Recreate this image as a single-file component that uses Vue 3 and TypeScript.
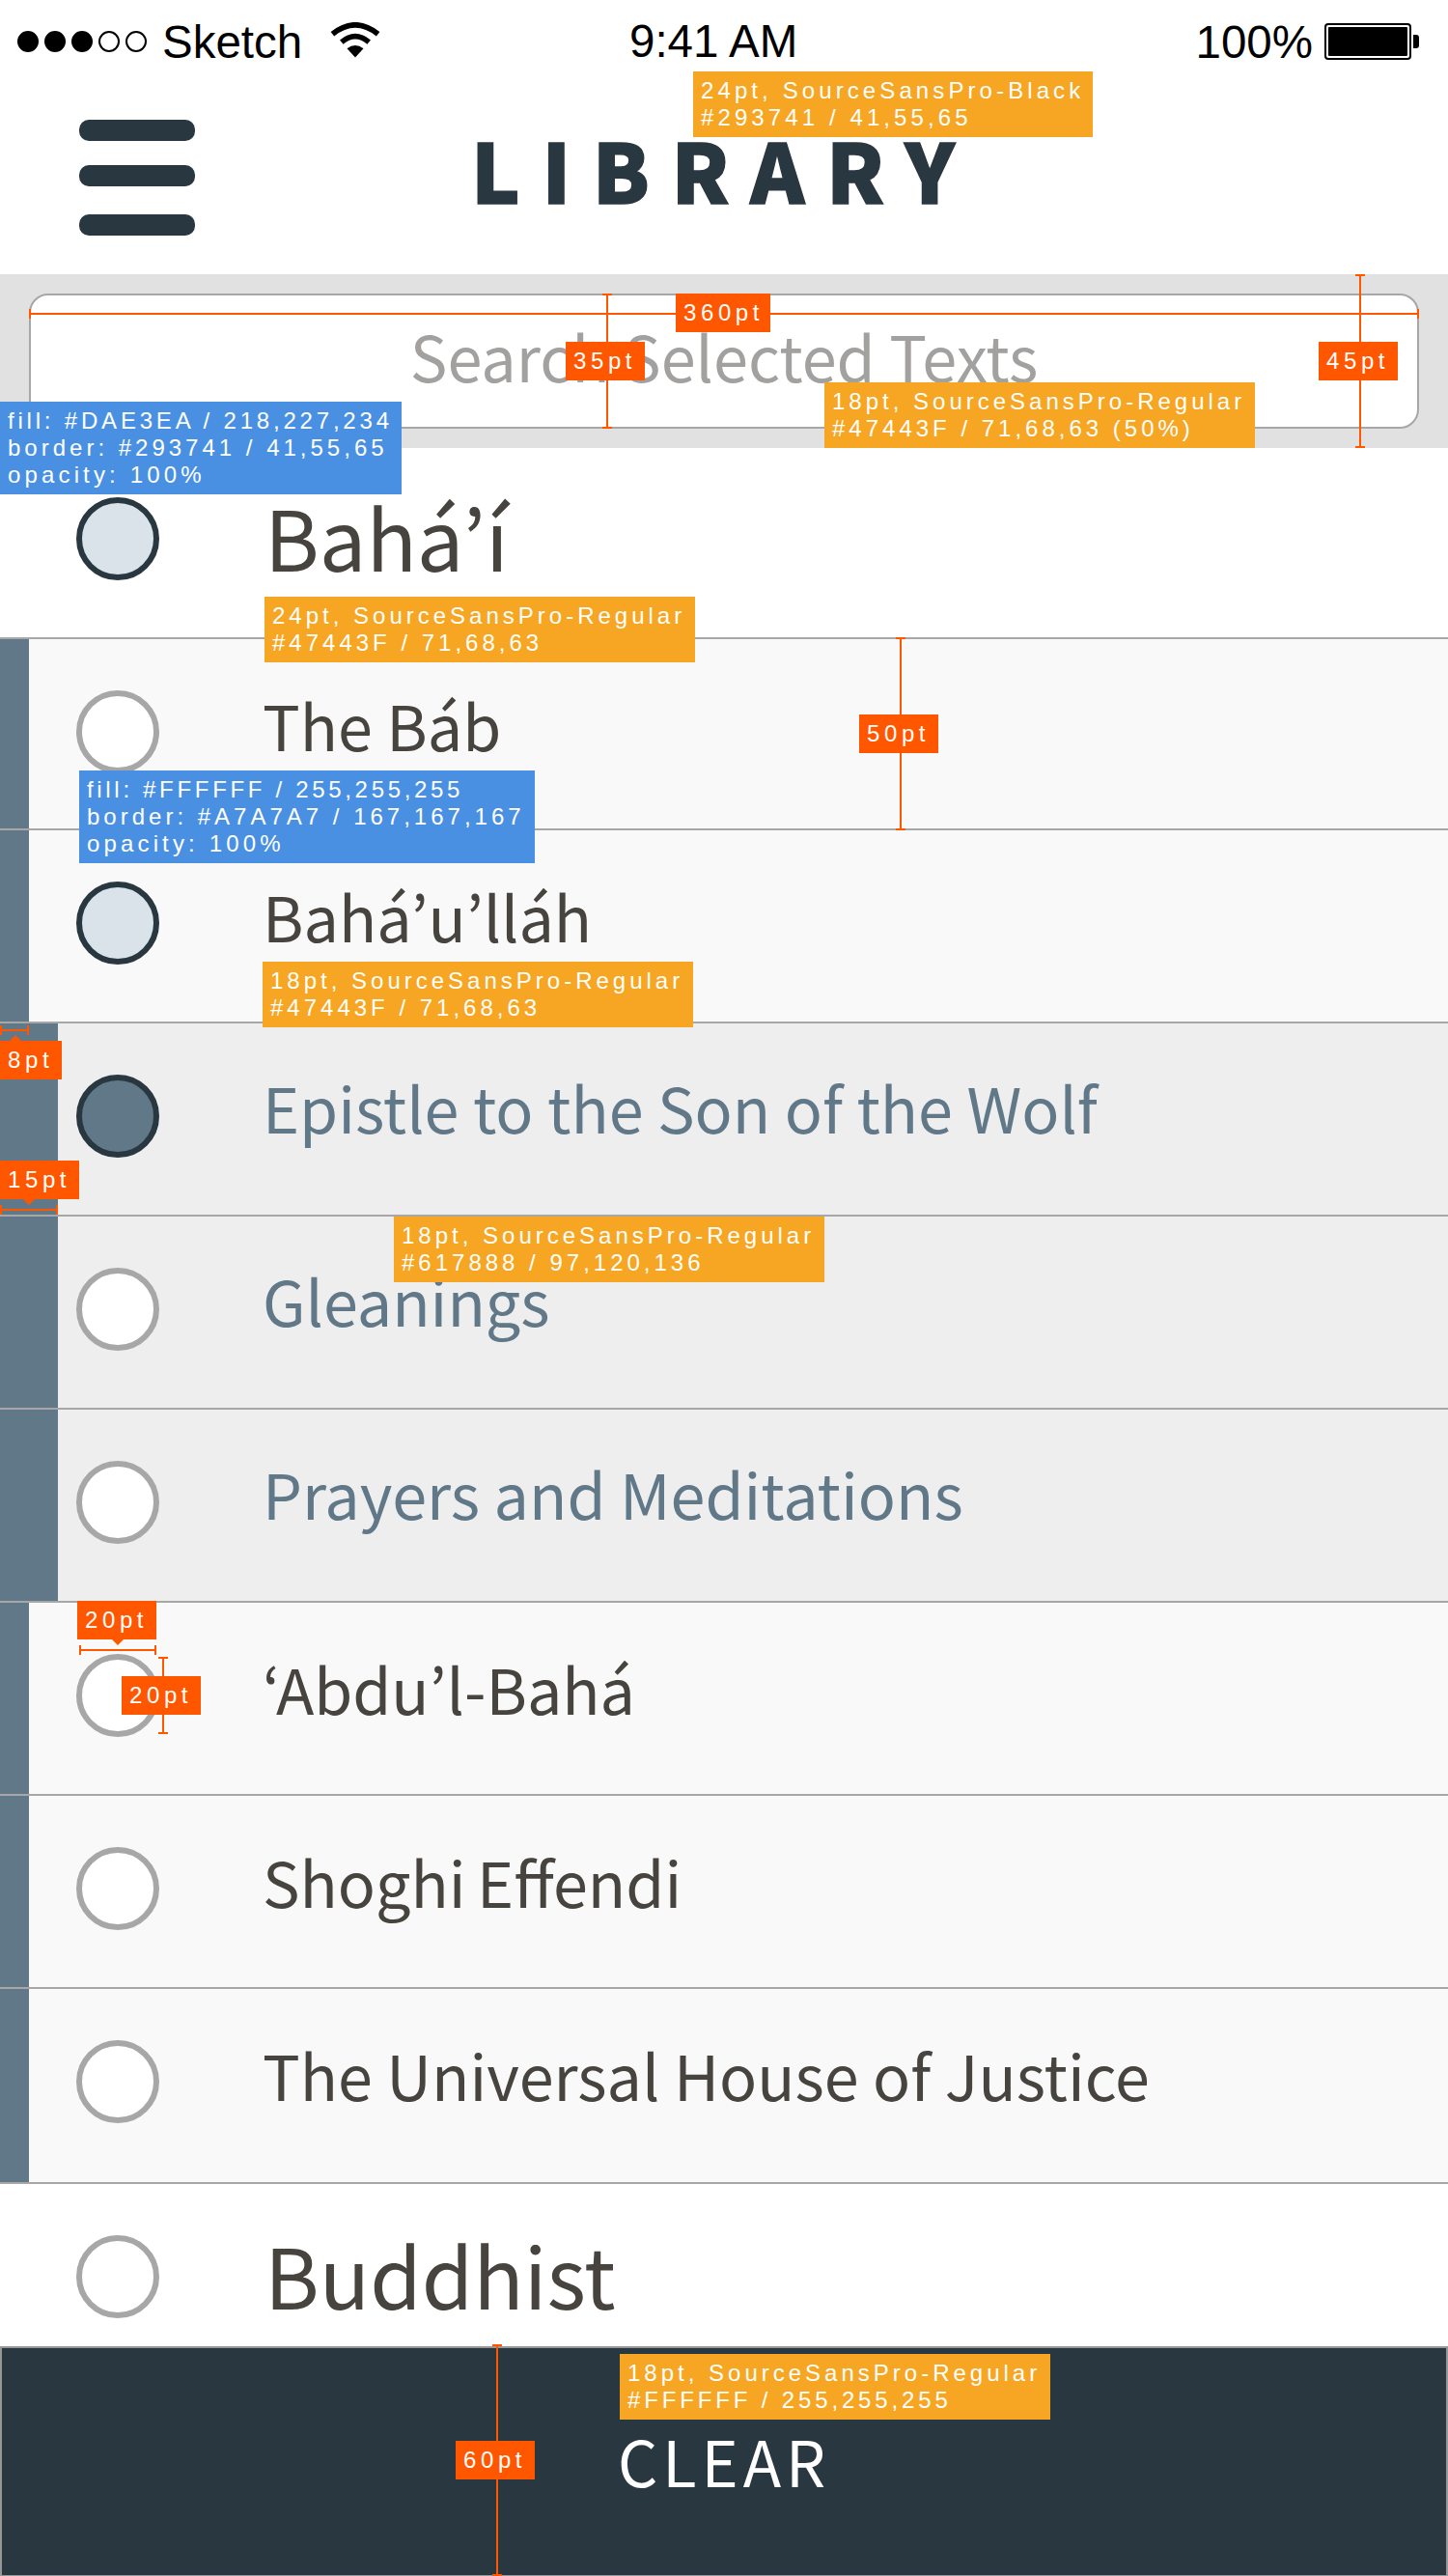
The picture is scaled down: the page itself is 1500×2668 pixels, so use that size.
<script setup lang="ts">
type Level = 'religion' | 'author' | 'book'
type State = 'empty' | 'partial' | 'full'

interface Row {
  label: string
  level: Level
  state: State
  size?: string
}

interface Tag {
  id: string
  kind: 'type' | 'color'
  lines: string[]
}

interface Measure {
  id: string
  axis: 'h' | 'v'
  text: string
}

const rows: Row[] = [
  { label: 'Bahá’í', level: 'religion', state: 'partial', size: 'first' },
  { label: 'The Báb', level: 'author', state: 'empty', size: 'short' },
  { label: 'Bahá’u’lláh', level: 'author', state: 'partial' },
  { label: 'Epistle to the Son of the Wolf', level: 'book', state: 'full' },
  { label: 'Gleanings', level: 'book', state: 'empty' },
  { label: 'Prayers and Meditations', level: 'book', state: 'empty' },
  { label: '‘Abdu’l-Bahá', level: 'author', state: 'empty' },
  { label: 'Shoghi Effendi', level: 'author', state: 'empty', size: 'tight' },
  { label: 'The Universal House of Justice', level: 'author', state: 'empty', size: 'tall' },
  { label: 'Buddhist', level: 'religion', state: 'empty', size: 'last' },
]

const tags: Tag[] = [
  { id: 'tag-title', kind: 'type', lines: ['24pt, SourceSansPro-Black', '#293741 / 41,55,65'] },
  { id: 'tag-search', kind: 'type', lines: ['18pt, SourceSansPro-Regular', '#47443F / 71,68,63 (50%)'] },
  { id: 'tag-partial', kind: 'color', lines: ['fill: #DAE3EA / 218,227,234', 'border: #293741 / 41,55,65', 'opacity: 100%'] },
  { id: 'tag-religion', kind: 'type', lines: ['24pt, SourceSansPro-Regular', '#47443F / 71,68,63'] },
  { id: 'tag-empty', kind: 'color', lines: ['fill: #FFFFFF / 255,255,255', 'border: #A7A7A7 / 167,167,167', 'opacity: 100%'] },
  { id: 'tag-author', kind: 'type', lines: ['18pt, SourceSansPro-Regular', '#47443F / 71,68,63'] },
  { id: 'tag-book', kind: 'type', lines: ['18pt, SourceSansPro-Regular', '#617888 / 97,120,136'] },
  { id: 'tag-clear', kind: 'type', lines: ['18pt, SourceSansPro-Regular', '#FFFFFF / 255,255,255'] },
]

const measures: Measure[] = [
  { id: 'm-input-w', axis: 'h', text: '360pt' },
  { id: 'm-input-h', axis: 'v', text: '35pt' },
  { id: 'm-search-h', axis: 'v', text: '45pt' },
  { id: 'm-row-h', axis: 'v', text: '50pt' },
  { id: 'm-bar-8', axis: 'h', text: '8pt' },
  { id: 'm-bar-15', axis: 'h', text: '15pt' },
  { id: 'm-circle-w', axis: 'h', text: '20pt' },
  { id: 'm-circle-h', axis: 'v', text: '20pt' },
  { id: 'm-footer-h', axis: 'v', text: '60pt' },
]
</script>

<template>
  <div class="screen">
    <div class="status">
      <div class="status-left">
        <span class="signal"><i v-for="n in 5" :key="n" :class="{ on: n <= 3 }"></i></span>
        <span class="carrier">Sketch</span>
        <svg class="wifi" width="52" height="37" viewBox="0 0 52 37">
          <path d="M26 36.5 L17.5 27.2 Q26 21 34.5 27.2 Z" />
          <path d="M11.8 20.6 Q26 8.8 40.2 20.6" fill="none" stroke="#000" stroke-width="5.6" />
          <path d="M2.4 12.2 Q26 -6.6 49.6 12.2" fill="none" stroke="#000" stroke-width="5.6" />
        </svg>
      </div>
      <div class="clock">9:41 AM</div>
      <div class="status-right">
        <span class="percent">100%</span>
        <svg class="battery" width="98" height="38" viewBox="0 0 98 38">
          <rect x="1" y="1" width="88" height="36" rx="3" fill="none" stroke="#000" stroke-width="2" />
          <rect x="4" y="4" width="82" height="30" rx="1" />
          <path d="M92 12 h3 q3 0 3 3 v8 q0 3 -3 3 h-3 z" />
        </svg>
      </div>
    </div>

    <header class="header">
      <button class="menu"><i></i><i></i><i></i></button>
      <h1 class="title">LIBRARY</h1>
    </header>

    <div class="search">
      <div class="input"><span class="placeholder">Search Selected Texts</span></div>
    </div>

    <ul class="list">
      <li v-for="row in rows" :key="row.label" class="row" :class="[row.level, row.size]">
        <span class="circle" :class="row.state"></span>
        <span class="label">{{ row.label }}</span>
      </li>
    </ul>

    <footer class="footer"><span class="clear">CLEAR</span></footer>

    <div class="notes">
      <div v-for="m in measures" :key="m.id" class="measure" :class="[m.axis, m.id]">
        <span class="rule"></span>
        <span class="value">{{ m.text }}</span>
      </div>
      <div v-for="t in tags" :key="t.id" class="tag" :class="[t.kind, t.id]">
        <div v-for="line in t.lines" :key="line">{{ line }}</div>
      </div>
    </div>
  </div>
</template>

<style>
body {
  margin: 0;
}
</style>

<style scoped>
.screen {
  position: relative;
  display: flex;
  flex-direction: column;
  width: 1500px;
  height: 2668px;
  overflow: hidden;
  background: #fff;
  color: #47443f;
  font-family: "Noto Sans CJK KR", "Noto Sans", sans-serif;
}

/* Status bar */
.status {
  display: grid;
  grid-template-columns: 652px 1fr 650px;
  height: 82px;
  color: #000;
  font-family: "Liberation Sans", Arial, sans-serif;
  font-size: 47.5px;
  line-height: 82px;
}
.status-left {
  display: flex;
  align-items: center;
  padding-left: 18px;
}
.signal {
  display: flex;
  gap: 6px;
}
.signal i {
  box-sizing: border-box;
  width: 22px;
  height: 22px;
  border: 2px solid #000;
  border-radius: 50%;
}
.signal i.on {
  background: #000;
}
.carrier {
  width: 148px;
  margin-left: 16px;
  padding-top: 3px;
}
.wifi {
  margin-top: -2px;
  margin-left: 26px;
}
.clock {
  padding-top: 2px;
  white-space: nowrap;
}
.status-right {
  display: flex;
  align-items: center;
  justify-content: flex-end;
  padding-right: 30px;
}
.percent {
  margin-right: 12px;
  padding-top: 3px;
}

/* Header */
.header {
  display: grid;
  grid-template-columns: 488px 1fr;
  height: 202px;
}
.menu {
  display: flex;
  flex-direction: column;
  width: 120px;
  margin: 42px 0 0 82px;
  padding: 0;
  border: 0;
  background: none;
}
.menu i {
  height: 22px;
  margin-bottom: 25px;
  border-radius: 10px;
  background: #293741;
}
.menu i + i {
  margin-bottom: 29px;
}
.title {
  margin: 42px 0 0;
  color: #293741;
  font-size: 85px;
  font-weight: 900;
  line-height: 100px;
  letter-spacing: 22.6px;
  -webkit-text-stroke: 1.5px #293741;
}

/* Search */
.search {
  box-sizing: border-box;
  height: 180px;
  padding: 20px 30px;
  background: #e1e1e1;
}
.input {
  box-sizing: border-box;
  height: 140px;
  border: 2px solid #a7a7a7;
  border-radius: 20px;
  background: #fff;
  text-align: center;
}
.placeholder {
  display: block;
  margin-top: 22px;
  color: #a3a19f;
  font-size: 64.8px;
  line-height: 80px;
}

/* List */
.list {
  margin: 0;
  padding: 0;
  list-style: none;
}
.row {
  display: flex;
  box-sizing: border-box;
  height: 200px;
  border-bottom: 2px solid #a7a7a7;
}
.row.first,
.row.short {
  height: 198px;
}
.row.tall {
  height: 202px;
}
.row.last {
  height: 168px;
  border-bottom: 0;
}
.row::before {
  content: "";
  flex: none;
  width: 0;
  background: #617888;
}
.row.author {
  background: #f9f9f9;
}
.row.author::before {
  width: 30px;
}
.row.book {
  background: #eee;
  color: #617888;
}
.row.book::before {
  width: 60px;
}
.circle {
  box-sizing: border-box;
  flex: none;
  width: 86px;
  height: 86px;
  margin: 53px 107px 0 79px;
  border: 6px solid #a7a7a7;
  border-radius: 50%;
  background: #fff;
}
.author .circle {
  margin-left: 49px;
}
.book .circle {
  margin-left: 19px;
}
.circle.partial {
  border-color: #293741;
  background: #dae3ea;
}
.circle.full {
  border-color: #293741;
  background: #617888;
}
.label {
  margin-top: 48px;
  font-size: 64.7px;
  line-height: 80px;
  white-space: nowrap;
}
.tight .label {
  word-spacing: -3px;
}
.book .label {
  margin-top: 46px;
}
.religion .label {
  margin-top: 43px;
  margin-left: 2px;
  font-size: 86.4px;
  line-height: 100px;
}
.first .circle {
  margin-top: 51px;
}
.first .label {
  margin-top: 41px;
}

/* Footer */
.footer {
  box-sizing: border-box;
  height: 238px;
  padding: 76px 0 0 638px;
  border: 2px solid #979797;
  border-bottom-width: 1px;
  background: #293741;
  color: #fff;
}
.clear {
  display: block;
  font-size: 64.8px;
  line-height: 80px;
  letter-spacing: 5px;
}

/* Annotation layer */
.notes {
  position: absolute;
  inset: 0;
  color: #fff;
  font-family: "Liberation Sans", Arial, sans-serif;
  font-size: 24px;
  line-height: 28px;
  white-space: nowrap;
}
.tag {
  position: absolute;
  box-sizing: border-box;
  padding: 6px 0 6px 8px;
  width: 446px;
  letter-spacing: 4px;
}
.tag.type { background: #f6a623; }
.tag.color { background: #4a90e2; }
.tag-title { left: 718px; top: 74px; width: 414px; letter-spacing: 4.1px; }
.tag-search { left: 854px; top: 396px; }
.tag-partial { left: 0; top: 416px; width: 416px; }
.tag-religion { left: 274px; top: 618px; }
.tag-empty { left: 82px; top: 798px; width: 472px; }
.tag-author { left: 272px; top: 996px; }
.tag-book { left: 408px; top: 1260px; }
.tag-clear { left: 642px; top: 2438px; }
.tag-partial > :first-child { letter-spacing: 3.8px; }
.tag-empty > :first-child { letter-spacing: 3.68px; }
.color > :last-child { letter-spacing: 4.15px; }
.tag-clear > :last-child { letter-spacing: 3.85px; }

.measure { position: absolute; }
.rule {
  position: absolute;
  box-sizing: border-box;
}
.rule::before {
  content: "";
  position: absolute;
  background: #ff5600;
}
.h .rule {
  left: 0;
  width: 100%;
  height: 10px;
  border: solid #ff5600;
  border-width: 0 2px;
}
.h .rule::before {
  left: 0;
  right: 0;
  top: 4px;
  height: 2px;
}
.v .rule {
  top: 0;
  width: 10px;
  height: 100%;
  border: solid #ff5600;
  border-width: 2px 0;
}
.v .rule::before {
  top: 0;
  bottom: 0;
  left: 4px;
  width: 2px;
}
.value {
  position: absolute;
  box-sizing: border-box;
  width: 82px;
  height: 40px;
  padding: 6px 0 6px 8px;
  background: #ff5600;
  letter-spacing: 4.6px;
}
.m-input-w { left: 30px; top: 320px; width: 1440px; }
.m-input-w .value { left: 670px; top: -16px; width: 98px; }
.m-input-h { left: 624px; top: 304px; height: 140px; }
.m-input-h .value { left: -38px; top: 50px; }
.m-search-h { left: 1404px; top: 284px; height: 180px; }
.m-search-h .value { left: -38px; top: 70px; }
.m-row-h { left: 928px; top: 660px; height: 200px; }
.m-row-h .value { left: -38px; top: 80px; }
.m-bar-8 { left: 0; top: 1062px; width: 30px; }
.m-bar-8 .value { left: 0; top: 16px; width: 64px; }
.m-bar-15 { left: 0; top: 1248px; width: 60px; }
.m-bar-15 .value { left: 0; top: -46px; }
.m-circle-w { left: 82px; top: 1704px; width: 80px; }
.m-circle-w .value { left: -2px; top: -46px; }
.m-circle-h { left: 164px; top: 1716px; height: 80px; }
.m-circle-h .value { left: -38px; top: 20px; }
.m-footer-h { left: 510px; top: 2428px; height: 240px; }
.m-footer-h .value { left: -38px; top: 100px; }

.m-bar-8 .value::after,
.m-bar-15 .value::after,
.m-circle-w .value::after {
  content: "";
  position: absolute;
  top: 40px;
  left: 24px;
  border: 6px solid transparent;
  border-top-color: #ff5600;
  border-bottom: 0;
}
.m-circle-w .value::after {
  left: 36px;
}
.m-bar-8 .value::after {
  top: -6px;
  left: 10px;
  border-top: 0;
  border-bottom: 6px solid #ff5600;
}
</style>
